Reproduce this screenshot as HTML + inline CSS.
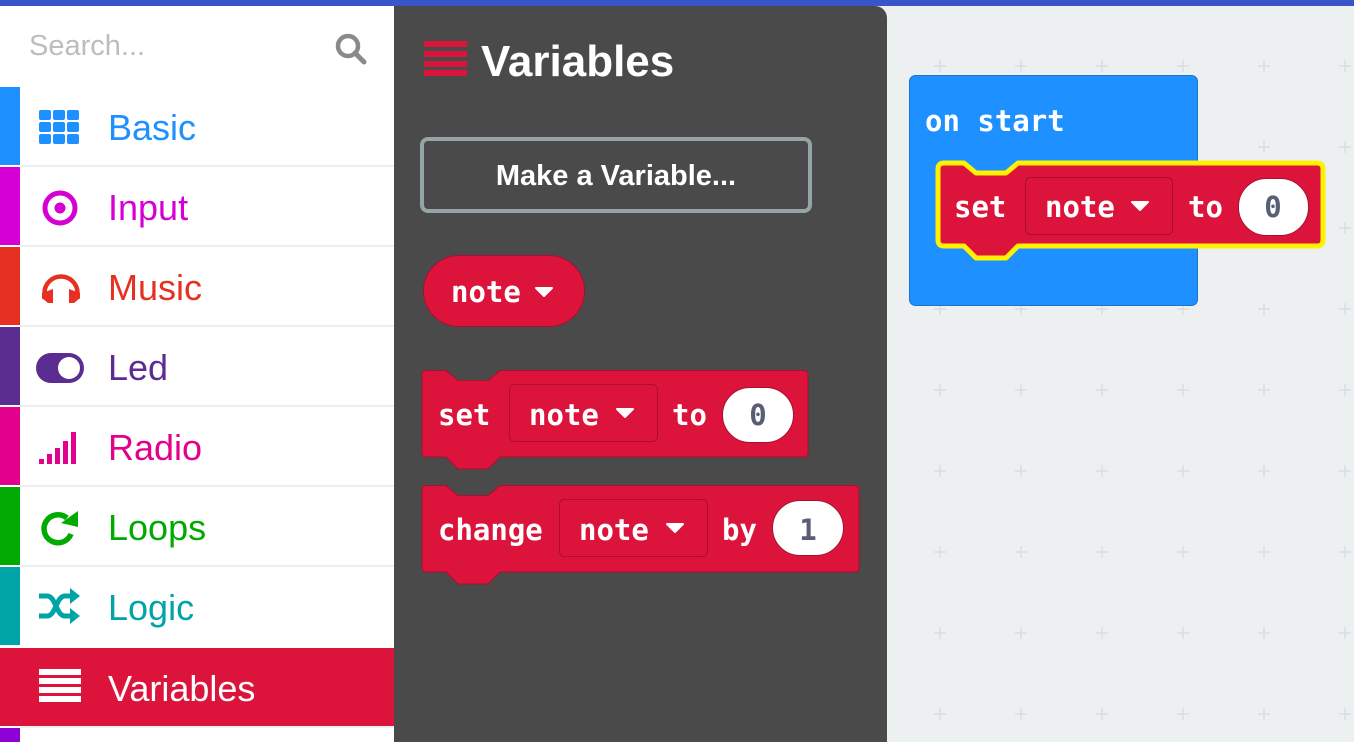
<!DOCTYPE html>
<html><head><meta charset="utf-8"><style>
*{margin:0;padding:0;box-sizing:border-box}
body{width:1354px;height:742px;overflow:hidden;background:#ecf0f1;position:relative;font-family:"Liberation Sans",sans-serif}
.top{position:absolute;left:0;top:0;width:1354px;height:6px;background:#3a55cc}
.side{position:absolute;left:0;top:6px;width:394px;height:736px;background:#fff}
.sideedge{position:absolute;left:394px;top:6px;width:2px;height:736px;background:#4b4a4b}
.search{position:absolute;left:29px;top:30px;font-size:29px;color:#bdbdbd}
.row{position:absolute;left:0;width:394px;height:78px}
.row .strip{position:absolute;left:0;top:0;width:20px;height:100%}
.row .lbl{position:absolute;left:108px;top:20px;font-size:36px}
.row svg{position:absolute;left:30px;top:14px}
.sep{position:absolute;left:20px;width:374px;height:2px;background:#ecf0f1}
.fly{position:absolute;left:396px;top:6px;width:491px;height:736px;background:#4b4a4b;border-top-right-radius:12px}
.mono{font-family:"DejaVu Sans Mono","Liberation Mono",monospace;font-weight:bold}
</style></head><body>
<div class="top"></div>
<div class="side"></div>
<div class="sideedge"></div>
<div class="search">Search...</div>
<svg style="position:absolute;left:334px;top:32px" width="34" height="34" viewBox="0 0 34 34"><circle cx="14" cy="14" r="10" fill="none" stroke="#8a8a8a" stroke-width="4.5"/><line x1="21" y1="21" x2="30" y2="30" stroke="#8a8a8a" stroke-width="5" stroke-linecap="round"/></svg>

<div class="row" style="top:87px"><div class="strip" style="background:#1e90ff"></div>
<svg width="56" height="50" viewBox="0 0 56 50"><g fill="#1e90ff"><rect x="9" y="9" width="12" height="10" rx="2"/><rect x="23" y="9" width="12" height="10" rx="2"/><rect x="37" y="9" width="12" height="10" rx="2"/><rect x="9" y="21" width="12" height="10" rx="2"/><rect x="23" y="21" width="12" height="10" rx="2"/><rect x="37" y="21" width="12" height="10" rx="2"/><rect x="9" y="33" width="12" height="10" rx="2"/><rect x="23" y="33" width="12" height="10" rx="2"/><rect x="37" y="33" width="12" height="10" rx="2"/></g></svg>
<div class="lbl" style="color:#1e90ff">Basic</div></div>
<div class="sep" style="top:165px"></div>
<div class="row" style="top:167px"><div class="strip" style="background:#d400d4"></div>
<svg width="56" height="56" viewBox="0 0 56 56"><circle cx="30" cy="27" r="15" fill="none" stroke="#d400d4" stroke-width="5"/><circle cx="30" cy="27" r="5.5" fill="#d400d4"/></svg>
<div class="lbl" style="color:#d400d4">Input</div></div>
<div class="sep" style="top:245px"></div>
<div class="row" style="top:247px"><div class="strip" style="background:#e63022"></div>
<svg width="56" height="56" viewBox="0 0 56 56"><path d="M14.5 38 V32 A16.5 16.5 0 0 1 47.5 32 V38" fill="none" stroke="#e63022" stroke-width="4.5"/><path d="M12 32 L23 28 V42 H18 L12 37Z M50 32 L39 28 V42 H44 L50 37Z" fill="#e63022"/></svg>
<div class="lbl" style="color:#e63022">Music</div></div>
<div class="sep" style="top:325px"></div>
<div class="row" style="top:327px"><div class="strip" style="background:#5c2d91"></div>
<svg width="60" height="56" viewBox="0 0 60 56"><rect x="6" y="12" width="48" height="30" rx="15" fill="#5c2d91"/><circle cx="39" cy="27" r="11" fill="#fff"/></svg>
<div class="lbl" style="color:#5c2d91">Led</div></div>
<div class="sep" style="top:405px"></div>
<div class="row" style="top:407px"><div class="strip" style="background:#e3008c"></div>
<svg width="56" height="56" viewBox="0 0 56 56"><g fill="#e3008c"><rect x="9" y="38" width="5" height="5"/><rect x="17" y="33" width="5" height="10"/><rect x="25" y="27" width="5" height="16"/><rect x="33" y="20" width="5" height="23"/><rect x="41" y="11" width="5" height="32"/></g></svg>
<div class="lbl" style="color:#e3008c">Radio</div></div>
<div class="sep" style="top:485px"></div>
<div class="row" style="top:487px"><div class="strip" style="background:#00aa00"></div>
<svg width="56" height="56" viewBox="0 0 56 56"><path d="M41 33 A14 14 0 1 1 37 17" fill="none" stroke="#00aa00" stroke-width="5.5"/><path d="M31 22 L48 10 V26Z" fill="#00aa00"/></svg>
<div class="lbl" style="color:#00aa00">Loops</div></div>
<div class="sep" style="top:565px"></div>
<div class="row" style="top:567px"><div class="strip" style="background:#00a4a6"></div>
<svg width="56" height="56" viewBox="0 0 56 56"><g fill="none" stroke="#00a4a6" stroke-width="5"><path d="M9 15 H17 C26 15 26 35 35 35 H42"/><path d="M9 35 H17 C26 35 26 15 35 15 H42"/></g><path d="M40 7 L50 15 L40 23Z M40 27 L50 35 L40 43Z" fill="#00a4a6"/></svg>
<div class="lbl" style="color:#00a4a6">Logic</div></div>
<div class="row" style="top:648px;background:#dc143c"><div class="strip" style="background:#dc143c"></div>
<svg width="56" height="56" viewBox="0 0 56 56"><g fill="#fff"><rect x="9" y="7" width="42" height="6"/><rect x="9" y="16" width="42" height="6"/><rect x="9" y="25" width="42" height="6"/><rect x="9" y="34" width="42" height="6"/></g></svg>
<div class="lbl" style="color:#fff">Variables</div></div>
<div class="sep" style="top:726px"></div>
<div style="position:absolute;left:0;top:728px;width:20px;height:14px;background:#8f00d6"></div>

<div class="fly"></div>
<svg style="position:absolute;left:0;top:0" width="1354" height="742" viewBox="0 0 1354 742">
<defs><pattern id="g" x="43" y="60" width="81" height="81" patternUnits="userSpaceOnUse"><path d="M0 6 H12 M6 0 V12" stroke="#d9dddf" stroke-width="1.5"/></pattern></defs>
<rect x="888" y="6" width="466" height="736" fill="url(#g)"/>
<g fill="#dc143c"><rect x="424" y="41" width="43" height="6"/><rect x="424" y="51" width="43" height="6"/><rect x="424" y="61" width="43" height="6"/><rect x="424" y="70" width="43" height="6"/></g>
<text x="481" y="76" font-family="Liberation Sans" font-weight="bold" font-size="44" fill="#fff">Variables</text>
<rect x="422" y="139" width="388" height="72" rx="6" fill="none" stroke="#95a5a6" stroke-width="4"/>
<text x="616" y="185" text-anchor="middle" font-family="Liberation Sans" font-weight="bold" font-size="29" fill="#fff">Make a Variable...</text>
<rect x="423.5" y="255.5" width="161" height="71" rx="35.5" fill="#dc143c" stroke="#a80f30"/>
<text x="451" y="302" class="mono" font-size="29" fill="#fff">note</text>
<path d="M536 288 h16 l-8 8z" fill="#fff" stroke="#fff" stroke-width="2" stroke-linejoin="round"/>
<path d="M426 370.5 h20 l12 10 h30 l12 -10 H804 q4 0 4 4 V453 q0 4 -4 4 H500 l-12 12 h-30 l-12 -12 H426 q-4 0 -4 -4 V374.5 q0 -4 4 -4z" fill="#dc143c" stroke="#a80f30"/>
<text x="438" y="425" class="mono" font-size="29" fill="#fff">set</text>
<rect x="509.5" y="384.5" width="148" height="57" rx="5" fill="#dc143c" stroke="#a80f30"/>
<text x="529" y="425" class="mono" font-size="29" fill="#fff">note</text>
<path d="M617 409 h16 l-8 8z" fill="#fff" stroke="#fff" stroke-width="2" stroke-linejoin="round"/>
<text x="672" y="425" class="mono" font-size="29" fill="#fff">to</text>
<rect x="722.5" y="387.5" width="71" height="55" rx="27.5" fill="#fff" stroke="#a80f30"/>
<text x="758" y="425" text-anchor="middle" class="mono" font-size="29" fill="#575e75" font-weight="normal">0</text>
<path d="M426 485.5 h20 l12 10 h30 l12 -10 H855 q4 0 4 4 V568 q0 4 -4 4 H500 l-12 12 h-30 l-12 -12 H426 q-4 0 -4 -4 V489.5 q0 -4 4 -4z" fill="#dc143c" stroke="#a80f30"/>
<text x="438" y="540" class="mono" font-size="29" fill="#fff">change</text>
<rect x="559.5" y="499.5" width="148" height="57" rx="5" fill="#dc143c" stroke="#a80f30"/>
<text x="579" y="540" class="mono" font-size="29" fill="#fff">note</text>
<path d="M667 524 h16 l-8 8z" fill="#fff" stroke="#fff" stroke-width="2" stroke-linejoin="round"/>
<text x="722" y="540" class="mono" font-size="29" fill="#fff">by</text>
<rect x="772.5" y="500.5" width="71" height="55" rx="27.5" fill="#fff" stroke="#a80f30"/>
<text x="808" y="540" text-anchor="middle" class="mono" font-size="29" fill="#575e75" font-weight="normal">1</text>
<rect x="909.5" y="75.5" width="288" height="230" rx="6" fill="#1e90ff" stroke="#1a73cc"/>
<text x="925" y="131" class="mono" font-size="29" fill="#fff">on start</text>
<path d="M944 163 h20 l12 10 h30 l12 -10 H1317 q6 0 6 6 V240 q0 6 -6 6 H1018 l-12 12 h-30 l-12 -12 H944 q-6 0 -6 -6 V169 q0 -6 6 -6z" fill="#dc143c" stroke="#fff200" stroke-width="5" stroke-linejoin="round"/>
<text x="954" y="217" class="mono" font-size="29" fill="#fff">set</text>
<rect x="1025.5" y="177.5" width="147" height="57" rx="5" fill="#dc143c" stroke="#a80f30"/>
<text x="1045" y="217" class="mono" font-size="29" fill="#fff">note</text>
<path d="M1132 202 h16 l-8 8z" fill="#fff" stroke="#fff" stroke-width="2" stroke-linejoin="round"/>
<text x="1188" y="217" class="mono" font-size="29" fill="#fff">to</text>
<rect x="1238.5" y="178.5" width="70" height="57" rx="28" fill="#fff" stroke="#a80f30"/>
<text x="1273" y="217" text-anchor="middle" class="mono" font-size="29" fill="#575e75" font-weight="normal">0</text>
</svg>
</body></html>
